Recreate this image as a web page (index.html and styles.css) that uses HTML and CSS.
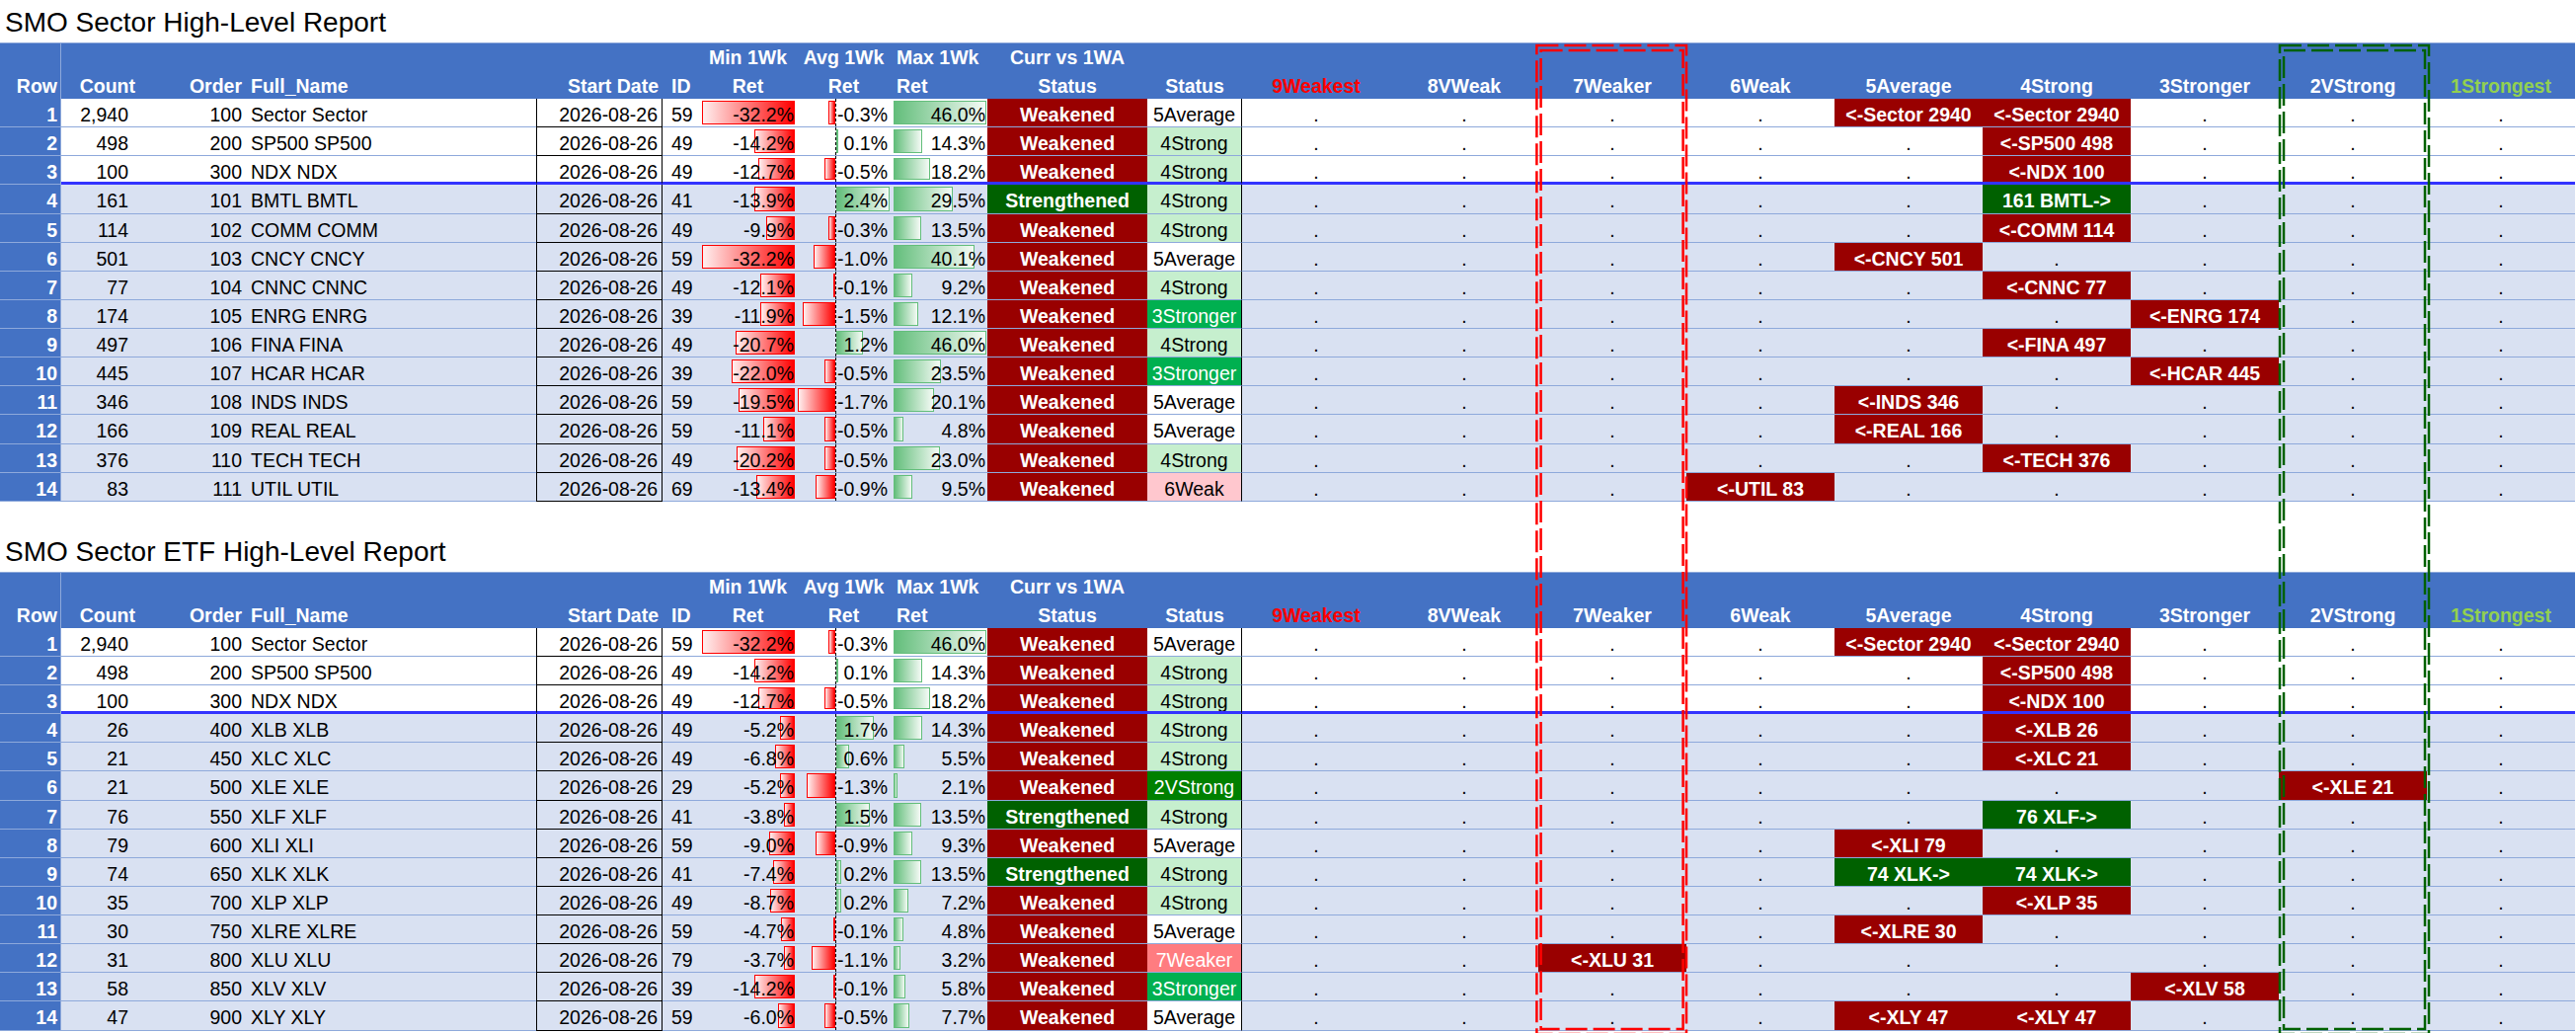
FILE: index.html
```html
<!DOCTYPE html>
<html lang="en">
<head>
<meta charset="utf-8">
<title>SMO Sector High-Level Report</title>
<link rel="stylesheet" href="styles.css">
</head>
<body>
<div class="page">
<div class="title">SMO Sector High-Level Report</div>
<div class="tbl">
 <div class="th">
  <div class="rn one">Row</div><div class="r3 one">Count</div><div class="r3 one">Order</div><div class="l6 one">Full_Name</div><div class="r4 one">Start Date</div><div class="l9 one">ID</div>
  <div>Min 1Wk<br>Ret</div><div>Avg 1Wk<br>Ret</div><div class="l6">Max 1Wk<br>Ret</div><div>Curr vs 1WA<br>Status</div><div class="one">Status</div>
  <div class="one red">9Weakest</div><div class="one">8VWeak</div><div class="one">7Weaker</div><div class="one">6Weak</div><div class="one">5Average</div><div class="one">4Strong</div><div class="one">3Stronger</div><div class="one">2VStrong</div><div class="one lg">1Strongest</div>
 </div>
 <div class="tr w"><div class="rn">1</div><div class="cnt">2,940</div><div class="ord">100</div><div class="nm">Sector Sector</div><div class="dt">2026-08-26</div><div class="id">59</div><div class="mn"><i style="width:94px"></i><span>-32.2%</span></div><div class="av"><b></b><i class="ng" style="width:6.7px"></i><span>-0.3%</span></div><div class="mx"><i style="width:94px"></i><span>46.0%</span></div><div class="wk">Weakened</div><div class="s5">5Average</div><div>.</div><div>.</div><div>.</div><div>.</div><div class="rd">&lt;-Sector 2940</div><div class="rd">&lt;-Sector 2940</div><div>.</div><div>.</div><div>.</div></div>
 <div class="tr w"><div class="rn">2</div><div class="cnt">498</div><div class="ord">200</div><div class="nm">SP500 SP500</div><div class="dt">2026-08-26</div><div class="id">49</div><div class="mn"><i style="width:41.5px"></i><span>-14.2%</span></div><div class="av"><b></b><i class="ps" style="width:2.2px"></i><span>0.1%</span></div><div class="mx"><i style="width:29.2px"></i><span>14.3%</span></div><div class="wk">Weakened</div><div class="s4">4Strong</div><div>.</div><div>.</div><div>.</div><div>.</div><div>.</div><div class="rd">&lt;-SP500 498</div><div>.</div><div>.</div><div>.</div></div>
 <div class="tr w sep"><div class="rn">3</div><div class="cnt">100</div><div class="ord">300</div><div class="nm">NDX NDX</div><div class="dt">2026-08-26</div><div class="id">49</div><div class="mn"><i style="width:37.1px"></i><span>-12.7%</span></div><div class="av"><b></b><i class="ng" style="width:11.2px"></i><span>-0.5%</span></div><div class="mx"><i style="width:37.1px"></i><span>18.2%</span></div><div class="wk">Weakened</div><div class="s4">4Strong</div><div>.</div><div>.</div><div>.</div><div>.</div><div>.</div><div class="rd">&lt;-NDX 100</div><div>.</div><div>.</div><div>.</div></div>
 <div class="tr"><div class="rn">4</div><div class="cnt">161</div><div class="ord">101</div><div class="nm">BMTL BMTL</div><div class="dt">2026-08-26</div><div class="id">41</div><div class="mn"><i style="width:40.6px"></i><span>-13.9%</span></div><div class="av"><b></b><i class="ps" style="width:53.5px"></i><span>2.4%</span></div><div class="mx"><i style="width:60.2px"></i><span>29.5%</span></div><div class="sg">Strengthened</div><div class="s4">4Strong</div><div>.</div><div>.</div><div>.</div><div>.</div><div>.</div><div class="gn">161 BMTL-&gt;</div><div>.</div><div>.</div><div>.</div></div>
 <div class="tr"><div class="rn">5</div><div class="cnt">114</div><div class="ord">102</div><div class="nm">COMM COMM</div><div class="dt">2026-08-26</div><div class="id">49</div><div class="mn"><i style="width:28.9px"></i><span>-9.9%</span></div><div class="av"><b></b><i class="ng" style="width:6.7px"></i><span>-0.3%</span></div><div class="mx"><i style="width:27.5px"></i><span>13.5%</span></div><div class="wk">Weakened</div><div class="s4">4Strong</div><div>.</div><div>.</div><div>.</div><div>.</div><div>.</div><div class="rd">&lt;-COMM 114</div><div>.</div><div>.</div><div>.</div></div>
 <div class="tr"><div class="rn">6</div><div class="cnt">501</div><div class="ord">103</div><div class="nm">CNCY CNCY</div><div class="dt">2026-08-26</div><div class="id">59</div><div class="mn"><i style="width:94px"></i><span>-32.2%</span></div><div class="av"><b></b><i class="ng" style="width:22.3px"></i><span>-1.0%</span></div><div class="mx"><i style="width:81.8px"></i><span>40.1%</span></div><div class="wk">Weakened</div><div class="s5">5Average</div><div>.</div><div>.</div><div>.</div><div>.</div><div class="rd">&lt;-CNCY 501</div><div>.</div><div>.</div><div>.</div><div>.</div></div>
 <div class="tr"><div class="rn">7</div><div class="cnt">77</div><div class="ord">104</div><div class="nm">CNNC CNNC</div><div class="dt">2026-08-26</div><div class="id">49</div><div class="mn"><i style="width:35.3px"></i><span>-12.1%</span></div><div class="av"><b></b><i class="ng" style="width:2.2px"></i><span>-0.1%</span></div><div class="mx"><i style="width:18.8px"></i><span>9.2%</span></div><div class="wk">Weakened</div><div class="s4">4Strong</div><div>.</div><div>.</div><div>.</div><div>.</div><div>.</div><div class="rd">&lt;-CNNC 77</div><div>.</div><div>.</div><div>.</div></div>
 <div class="tr"><div class="rn">8</div><div class="cnt">174</div><div class="ord">105</div><div class="nm">ENRG ENRG</div><div class="dt">2026-08-26</div><div class="id">39</div><div class="mn"><i style="width:34.7px"></i><span>-11.9%</span></div><div class="av"><b></b><i class="ng" style="width:33.5px"></i><span>-1.5%</span></div><div class="mx"><i style="width:24.7px"></i><span>12.1%</span></div><div class="wk">Weakened</div><div class="s3">3Stronger</div><div>.</div><div>.</div><div>.</div><div>.</div><div>.</div><div>.</div><div class="rd">&lt;-ENRG 174</div><div>.</div><div>.</div></div>
 <div class="tr"><div class="rn">9</div><div class="cnt">497</div><div class="ord">106</div><div class="nm">FINA FINA</div><div class="dt">2026-08-26</div><div class="id">49</div><div class="mn"><i style="width:60.4px"></i><span>-20.7%</span></div><div class="av"><b></b><i class="ps" style="width:26.8px"></i><span>1.2%</span></div><div class="mx"><i style="width:94px"></i><span>46.0%</span></div><div class="wk">Weakened</div><div class="s4">4Strong</div><div>.</div><div>.</div><div>.</div><div>.</div><div>.</div><div class="rd">&lt;-FINA 497</div><div>.</div><div>.</div><div>.</div></div>
 <div class="tr"><div class="rn">10</div><div class="cnt">445</div><div class="ord">107</div><div class="nm">HCAR HCAR</div><div class="dt">2026-08-26</div><div class="id">39</div><div class="mn"><i style="width:64.2px"></i><span>-22.0%</span></div><div class="av"><b></b><i class="ng" style="width:11.2px"></i><span>-0.5%</span></div><div class="mx"><i style="width:47.9px"></i><span>23.5%</span></div><div class="wk">Weakened</div><div class="s3">3Stronger</div><div>.</div><div>.</div><div>.</div><div>.</div><div>.</div><div>.</div><div class="rd">&lt;-HCAR 445</div><div>.</div><div>.</div></div>
 <div class="tr"><div class="rn">11</div><div class="cnt">346</div><div class="ord">108</div><div class="nm">INDS INDS</div><div class="dt">2026-08-26</div><div class="id">59</div><div class="mn"><i style="width:56.9px"></i><span>-19.5%</span></div><div class="av"><b></b><i class="ng" style="width:37.9px"></i><span>-1.7%</span></div><div class="mx"><i style="width:41px"></i><span>20.1%</span></div><div class="wk">Weakened</div><div class="s5">5Average</div><div>.</div><div>.</div><div>.</div><div>.</div><div class="rd">&lt;-INDS 346</div><div>.</div><div>.</div><div>.</div><div>.</div></div>
 <div class="tr"><div class="rn">12</div><div class="cnt">166</div><div class="ord">109</div><div class="nm">REAL REAL</div><div class="dt">2026-08-26</div><div class="id">59</div><div class="mn"><i style="width:32.4px"></i><span>-11.1%</span></div><div class="av"><b></b><i class="ng" style="width:11.2px"></i><span>-0.5%</span></div><div class="mx"><i style="width:9.8px"></i><span>4.8%</span></div><div class="wk">Weakened</div><div class="s5">5Average</div><div>.</div><div>.</div><div>.</div><div>.</div><div class="rd">&lt;-REAL 166</div><div>.</div><div>.</div><div>.</div><div>.</div></div>
 <div class="tr"><div class="rn">13</div><div class="cnt">376</div><div class="ord">110</div><div class="nm">TECH TECH</div><div class="dt">2026-08-26</div><div class="id">49</div><div class="mn"><i style="width:59px"></i><span>-20.2%</span></div><div class="av"><b></b><i class="ng" style="width:11.2px"></i><span>-0.5%</span></div><div class="mx"><i style="width:46.9px"></i><span>23.0%</span></div><div class="wk">Weakened</div><div class="s4">4Strong</div><div>.</div><div>.</div><div>.</div><div>.</div><div>.</div><div class="rd">&lt;-TECH 376</div><div>.</div><div>.</div><div>.</div></div>
 <div class="tr"><div class="rn">14</div><div class="cnt">83</div><div class="ord">111</div><div class="nm">UTIL UTIL</div><div class="dt">2026-08-26</div><div class="id">69</div><div class="mn"><i style="width:39.1px"></i><span>-13.4%</span></div><div class="av"><b></b><i class="ng" style="width:20px"></i><span>-0.9%</span></div><div class="mx"><i style="width:19.4px"></i><span>9.5%</span></div><div class="wk">Weakened</div><div class="s6">6Weak</div><div>.</div><div>.</div><div>.</div><div class="rd">&lt;-UTIL 83</div><div>.</div><div>.</div><div>.</div><div>.</div><div>.</div></div>
</div>

<div class="title title2">SMO Sector ETF High-Level Report</div>
<div class="tbl">
 <div class="th">
  <div class="rn one">Row</div><div class="r3 one">Count</div><div class="r3 one">Order</div><div class="l6 one">Full_Name</div><div class="r4 one">Start Date</div><div class="l9 one">ID</div>
  <div>Min 1Wk<br>Ret</div><div>Avg 1Wk<br>Ret</div><div class="l6">Max 1Wk<br>Ret</div><div>Curr vs 1WA<br>Status</div><div class="one">Status</div>
  <div class="one red">9Weakest</div><div class="one">8VWeak</div><div class="one">7Weaker</div><div class="one">6Weak</div><div class="one">5Average</div><div class="one">4Strong</div><div class="one">3Stronger</div><div class="one">2VStrong</div><div class="one lg">1Strongest</div>
 </div>
 <div class="tr w"><div class="rn">1</div><div class="cnt">2,940</div><div class="ord">100</div><div class="nm">Sector Sector</div><div class="dt">2026-08-26</div><div class="id">59</div><div class="mn"><i style="width:94px"></i><span>-32.2%</span></div><div class="av"><b></b><i class="ng" style="width:6.7px"></i><span>-0.3%</span></div><div class="mx"><i style="width:94px"></i><span>46.0%</span></div><div class="wk">Weakened</div><div class="s5">5Average</div><div>.</div><div>.</div><div>.</div><div>.</div><div class="rd">&lt;-Sector 2940</div><div class="rd">&lt;-Sector 2940</div><div>.</div><div>.</div><div>.</div></div>
 <div class="tr w"><div class="rn">2</div><div class="cnt">498</div><div class="ord">200</div><div class="nm">SP500 SP500</div><div class="dt">2026-08-26</div><div class="id">49</div><div class="mn"><i style="width:41.5px"></i><span>-14.2%</span></div><div class="av"><b></b><i class="ps" style="width:2.2px"></i><span>0.1%</span></div><div class="mx"><i style="width:29.2px"></i><span>14.3%</span></div><div class="wk">Weakened</div><div class="s4">4Strong</div><div>.</div><div>.</div><div>.</div><div>.</div><div>.</div><div class="rd">&lt;-SP500 498</div><div>.</div><div>.</div><div>.</div></div>
 <div class="tr w sep"><div class="rn">3</div><div class="cnt">100</div><div class="ord">300</div><div class="nm">NDX NDX</div><div class="dt">2026-08-26</div><div class="id">49</div><div class="mn"><i style="width:37.1px"></i><span>-12.7%</span></div><div class="av"><b></b><i class="ng" style="width:11.2px"></i><span>-0.5%</span></div><div class="mx"><i style="width:37.1px"></i><span>18.2%</span></div><div class="wk">Weakened</div><div class="s4">4Strong</div><div>.</div><div>.</div><div>.</div><div>.</div><div>.</div><div class="rd">&lt;-NDX 100</div><div>.</div><div>.</div><div>.</div></div>
 <div class="tr"><div class="rn">4</div><div class="cnt">26</div><div class="ord">400</div><div class="nm">XLB XLB</div><div class="dt">2026-08-26</div><div class="id">49</div><div class="mn"><i style="width:15.2px"></i><span>-5.2%</span></div><div class="av"><b></b><i class="ps" style="width:37.9px"></i><span>1.7%</span></div><div class="mx"><i style="width:29.2px"></i><span>14.3%</span></div><div class="wk">Weakened</div><div class="s4">4Strong</div><div>.</div><div>.</div><div>.</div><div>.</div><div>.</div><div class="rd">&lt;-XLB 26</div><div>.</div><div>.</div><div>.</div></div>
 <div class="tr"><div class="rn">5</div><div class="cnt">21</div><div class="ord">450</div><div class="nm">XLC XLC</div><div class="dt">2026-08-26</div><div class="id">49</div><div class="mn"><i style="width:19.9px"></i><span>-6.8%</span></div><div class="av"><b></b><i class="ps" style="width:13.4px"></i><span>0.6%</span></div><div class="mx"><i style="width:11.2px"></i><span>5.5%</span></div><div class="wk">Weakened</div><div class="s4">4Strong</div><div>.</div><div>.</div><div>.</div><div>.</div><div>.</div><div class="rd">&lt;-XLC 21</div><div>.</div><div>.</div><div>.</div></div>
 <div class="tr"><div class="rn">6</div><div class="cnt">21</div><div class="ord">500</div><div class="nm">XLE XLE</div><div class="dt">2026-08-26</div><div class="id">29</div><div class="mn"><i style="width:15.2px"></i><span>-5.2%</span></div><div class="av"><b></b><i class="ng" style="width:29px"></i><span>-1.3%</span></div><div class="mx"><i style="width:4.3px"></i><span>2.1%</span></div><div class="wk">Weakened</div><div class="s2">2VStrong</div><div>.</div><div>.</div><div>.</div><div>.</div><div>.</div><div>.</div><div>.</div><div class="rd">&lt;-XLE 21</div><div>.</div></div>
 <div class="tr"><div class="rn">7</div><div class="cnt">76</div><div class="ord">550</div><div class="nm">XLF XLF</div><div class="dt">2026-08-26</div><div class="id">41</div><div class="mn"><i style="width:11.1px"></i><span>-3.8%</span></div><div class="av"><b></b><i class="ps" style="width:33.5px"></i><span>1.5%</span></div><div class="mx"><i style="width:27.5px"></i><span>13.5%</span></div><div class="sg">Strengthened</div><div class="s4">4Strong</div><div>.</div><div>.</div><div>.</div><div>.</div><div>.</div><div class="gn">76 XLF-&gt;</div><div>.</div><div>.</div><div>.</div></div>
 <div class="tr"><div class="rn">8</div><div class="cnt">79</div><div class="ord">600</div><div class="nm">XLI XLI</div><div class="dt">2026-08-26</div><div class="id">59</div><div class="mn"><i style="width:26.3px"></i><span>-9.0%</span></div><div class="av"><b></b><i class="ng" style="width:20px"></i><span>-0.9%</span></div><div class="mx"><i style="width:19px"></i><span>9.3%</span></div><div class="wk">Weakened</div><div class="s5">5Average</div><div>.</div><div>.</div><div>.</div><div>.</div><div class="rd">&lt;-XLI 79</div><div>.</div><div>.</div><div>.</div><div>.</div></div>
 <div class="tr"><div class="rn">9</div><div class="cnt">74</div><div class="ord">650</div><div class="nm">XLK XLK</div><div class="dt">2026-08-26</div><div class="id">41</div><div class="mn"><i style="width:21.6px"></i><span>-7.4%</span></div><div class="av"><b></b><i class="ps" style="width:4.5px"></i><span>0.2%</span></div><div class="mx"><i style="width:27.5px"></i><span>13.5%</span></div><div class="sg">Strengthened</div><div class="s4">4Strong</div><div>.</div><div>.</div><div>.</div><div>.</div><div class="gn">74 XLK-&gt;</div><div class="gn">74 XLK-&gt;</div><div>.</div><div>.</div><div>.</div></div>
 <div class="tr"><div class="rn">10</div><div class="cnt">35</div><div class="ord">700</div><div class="nm">XLP XLP</div><div class="dt">2026-08-26</div><div class="id">49</div><div class="mn"><i style="width:25.4px"></i><span>-8.7%</span></div><div class="av"><b></b><i class="ps" style="width:4.5px"></i><span>0.2%</span></div><div class="mx"><i style="width:14.7px"></i><span>7.2%</span></div><div class="wk">Weakened</div><div class="s4">4Strong</div><div>.</div><div>.</div><div>.</div><div>.</div><div>.</div><div class="rd">&lt;-XLP 35</div><div>.</div><div>.</div><div>.</div></div>
 <div class="tr"><div class="rn">11</div><div class="cnt">30</div><div class="ord">750</div><div class="nm">XLRE XLRE</div><div class="dt">2026-08-26</div><div class="id">59</div><div class="mn"><i style="width:13.7px"></i><span>-4.7%</span></div><div class="av"><b></b><i class="ng" style="width:2.2px"></i><span>-0.1%</span></div><div class="mx"><i style="width:9.8px"></i><span>4.8%</span></div><div class="wk">Weakened</div><div class="s5">5Average</div><div>.</div><div>.</div><div>.</div><div>.</div><div class="rd">&lt;-XLRE 30</div><div>.</div><div>.</div><div>.</div><div>.</div></div>
 <div class="tr"><div class="rn">12</div><div class="cnt">31</div><div class="ord">800</div><div class="nm">XLU XLU</div><div class="dt">2026-08-26</div><div class="id">79</div><div class="mn"><i style="width:10.8px"></i><span>-3.7%</span></div><div class="av"><b></b><i class="ng" style="width:24.5px"></i><span>-1.1%</span></div><div class="mx"><i style="width:6.5px"></i><span>3.2%</span></div><div class="wk">Weakened</div><div class="s7">7Weaker</div><div>.</div><div>.</div><div class="rd">&lt;-XLU 31</div><div>.</div><div>.</div><div>.</div><div>.</div><div>.</div><div>.</div></div>
 <div class="tr"><div class="rn">13</div><div class="cnt">58</div><div class="ord">850</div><div class="nm">XLV XLV</div><div class="dt">2026-08-26</div><div class="id">39</div><div class="mn"><i style="width:41.5px"></i><span>-14.2%</span></div><div class="av"><b></b><i class="ng" style="width:2.2px"></i><span>-0.1%</span></div><div class="mx"><i style="width:11.8px"></i><span>5.8%</span></div><div class="wk">Weakened</div><div class="s3">3Stronger</div><div>.</div><div>.</div><div>.</div><div>.</div><div>.</div><div>.</div><div class="rd">&lt;-XLV 58</div><div>.</div><div>.</div></div>
 <div class="tr"><div class="rn">14</div><div class="cnt">47</div><div class="ord">900</div><div class="nm">XLY XLY</div><div class="dt">2026-08-26</div><div class="id">59</div><div class="mn"><i style="width:17.5px"></i><span>-6.0%</span></div><div class="av"><b></b><i class="ng" style="width:11.2px"></i><span>-0.5%</span></div><div class="mx"><i style="width:15.7px"></i><span>7.7%</span></div><div class="wk">Weakened</div><div class="s5">5Average</div><div>.</div><div>.</div><div>.</div><div>.</div><div class="rd">&lt;-XLY 47</div><div class="rd">&lt;-XLY 47</div><div>.</div><div>.</div><div>.</div></div>
</div>
</div>

<svg class="marks" width="2609" height="1046" viewBox="0 0 2609 1046" aria-hidden="true">
 <g fill="none" stroke="#FF0000" stroke-width="2.5" stroke-dasharray="22 6">
  <rect x="1556.4" y="46" width="151.6" height="1001"/>
  <rect x="1560.6" y="51" width="144" height="991"/>
 </g>
 <g fill="none" stroke="#006100" stroke-width="2.5" stroke-dasharray="22 6">
  <rect x="2309" y="46" width="151" height="1001"/>
  <rect x="2313" y="51" width="143" height="991"/>
 </g>
</svg>
</body>
</html>
```

FILE: styles.css
```css
html, body {
  margin: 0;
  padding: 0;
  background: #fff;
}

body {
  font-family: "Liberation Sans", Arial, sans-serif;
  font-size: 19.5px;
  color: #000;
  width: 2609px;
  height: 1046px;
  overflow: hidden;
  position: relative;
}

.title {
  font-size: 28px;
  line-height: 40px;
  height: 43px;
  box-sizing: border-box;
  padding: 3px 0 0 5px;
  white-space: nowrap;
}

.title2 {
  height: 71px;
  padding-top: 31px;
}

.th,
.tr {
  display: grid;
  grid-template-columns: 62px 78px 108px 295px 128px 37px 99px 95px 98px 162px 96px repeat(9, 150px);
  width: 2608px;
}

/* header */
.th {
  height: 57px;
  box-sizing: border-box;
  background: #4472C4;
  color: #fff;
  font-weight: bold;
  border-top: 1px solid #8EA9DB;
}

.th > div {
  line-height: 29px;
  text-align: center;
  white-space: nowrap;
}

.th .one { padding-top: 29px; }
.th .r3 { text-align: right; padding-right: 3px; }
.th .r4 { text-align: right; padding-right: 4px; }
.th .l6 { text-align: left; padding-left: 6px; }
.th .l9 { text-align: left; padding-left: 9px; }
.th .red { color: #FF0000; }
.th .lg { color: #92D050; }

/* rows */
.tr {
  height: 29.14px;
  background: #D9E1F2;
}

.tr.w { background: #fff; }

.tr > div {
  box-sizing: border-box;
  height: 29.14px;
  overflow: hidden;
  line-height: 29px;
  padding-top: 2px;
  text-align: center;
  white-space: nowrap;
  border-bottom: 1px solid #8EA9DB;
}

.rn {
  background: #4472C4;
  color: #fff;
  font-weight: bold;
  text-align: right !important;
  padding-right: 3px;
  border-right: 1px solid #8EA9DB;
}

.th .rn {
  padding-right: 3px;
}

.tr .cnt { text-align: right; padding-right: 10px; }
.tr .ord { text-align: right; padding-right: 3px; }
.tr .nm { text-align: left; padding-left: 6px; }
.tr .dt {
  text-align: right;
  padding-right: 4px;
  border-left: 1px solid #000;
  border-right: 1px solid #000;
  border-bottom-color: #000;
}
.tr .id { text-align: left; padding-left: 9px; }

.tr .mn,
.tr .av,
.tr .mx {
  position: relative;
  text-align: right;
}
.tr .mn { padding-right: 3px; }
.tr .av { padding-right: 3px; }
.tr .mx { padding-right: 2px; }

.tr .mn span,
.tr .av span,
.tr .mx span {
  position: relative;
}

.tr .mn i,
.tr .av i,
.tr .mx i {
  position: absolute;
  top: 2px;
  bottom: 2px;
  box-sizing: border-box;
}

.tr .mn i {
  right: 2px;
  background: linear-gradient(to right, #FFEFEF, #FF0000);
  border: 1px solid #FF0000;
}

.tr .mx i {
  left: 3px;
  background: linear-gradient(to right, #63BE7B, #F4FAF5);
  border: 1px solid #63BE7B;
}

.tr .av b {
  position: absolute;
  left: 39px;
  top: 0;
  bottom: 0;
  border-left: 1px dashed #000;
}

.tr .av .ng {
  right: calc(100% - 39px);
  background: linear-gradient(to right, #FFEFEF, #FF0000);
  border: 1px solid #FF0000;
}

.tr .av .ps {
  left: 40px;
  background: linear-gradient(to right, #63BE7B, #F4FAF5);
  border: 1px solid #63BE7B;
}

.tr.sep > div:not(.rn) {
  border-bottom: 3px solid #3333FF;
}

/* status columns */
.wk { background: #990000; color: #fff; font-weight: bold; }
.sg { background: #006100; color: #fff; font-weight: bold; }

.s2, .s3, .s4, .s5, .s6, .s7 { border-right: 1px solid #000; }
.s5 { background: #fff; }
.s4 { background: #C6EFCE; }
.s3 { background: #00B050; color: #fff; }
.s2 { background: #008000; color: #fff; }
.s6 { background: #FFC7CE; }
.s7 { background: #FF7C80; color: #fff; }

/* position grid */
.rd { background: #990000; color: #fff; font-weight: bold; }
.gn { background: #006100; color: #fff; font-weight: bold; }

/* dashed highlight frames drawn over the sheet */
.marks {
  position: absolute;
  left: 0;
  top: 0;
  pointer-events: none;
}
```
